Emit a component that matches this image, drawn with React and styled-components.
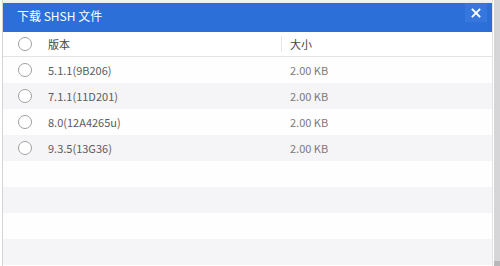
import React from 'react';
import styled, { createGlobalStyle } from 'styled-components';

const GlobalStyle = createGlobalStyle`
  html, body { margin: 0; padding: 0; background: #fff; }
  body { font-family: "Noto Sans CJK SC", "Noto Sans", sans-serif; overflow: hidden; }
`;

const rows = [
  { version: '5.1.1(9B206)', size: '2.00 KB' },
  { version: '7.1.1(11D201)', size: '2.00 KB' },
  { version: '8.0(12A4265u)', size: '2.00 KB' },
  { version: '9.3.5(13G36)', size: '2.00 KB' },
  null,
  null,
  null,
  null,
];

const App = () => {
  return (
    <>
      <GlobalStyle />
      <Page>
        <Dialog>
          <TopStrip />
          <Header>
            <Title>下载 SHSH 文件</Title>
            <Close>
              <svg width="10" height="10" viewBox="0 0 10 10">
                <path d="M1.5 1.5 L8.5 8.5 M8.5 1.5 L1.5 8.5" stroke="#fff" strokeWidth="1.8" strokeLinecap="square" />
              </svg>
            </Close>
          </Header>
          <Table>
            <HeadRow>
              <RadioCell><Radio /></RadioCell>
              <VersionCell $head>版本</VersionCell>
              <SizeCell $head>大小</SizeCell>
            </HeadRow>
            {rows.map((r, i) => (
              <Row key={i} $alt={i % 2 === 1}>
                {r && (
                  <>
                    <RadioCell><Radio /></RadioCell>
                    <VersionCell>{r.version}</VersionCell>
                    <SizeCell>{r.size}</SizeCell>
                  </>
                )}
              </Row>
            ))}
          </Table>
        </Dialog>
        <Scrollbar>
          <Thumb />
        </Scrollbar>
      </Page>
    </>
  );
};

export default App;

const Page = styled.div`
  width: 500px;
  height: 266px;
  display: flex;
  overflow: hidden;
  background: #fff;
`;

const Dialog = styled.div`
  width: 491px;
  margin-left: 2px;
  border-left: 1px solid #d4d4d6;
  border-right: 1px solid #e2e2e4;
  display: flex;
  flex-direction: column;
  overflow: hidden;
`;

const TopStrip = styled.div`
  height: 3px;
  background: linear-gradient(180deg, #f4f4f6, #e9ecf2);
  flex-shrink: 0;
`;

const Header = styled.div`
  height: 29px;
  background: #2c6fd8;
  display: flex;
  align-items: flex-start;
  justify-content: space-between;
  flex-shrink: 0;
`;

const Title = styled.div`
  color: #fff;
  font-size: 12px;
  line-height: 26px;
  padding-left: 14px;
`;

const Close = styled.div`
  width: 22px;
  height: 19px;
  margin-right: 5px;
  background: #3677de;
  display: flex;
  align-items: center;
  justify-content: center;
`;

const Table = styled.div`
  display: flex;
  flex-direction: column;
`;

const Row = styled.div`
  height: 26px;
  flex-shrink: 0;
  display: flex;
  align-items: center;
  background: ${p => (p.$alt ? '#f5f4f7' : '#fefefe')};
`;

const HeadRow = styled(Row)`
  height: 24px;
  background: #fff;
  border-bottom: 1px solid #e4e4e6;
`;

const RadioCell = styled.div`
  width: 43px;
  display: flex;
  justify-content: center;
`;

const Radio = styled.span`
  width: 14px;
  height: 14px;
  border-radius: 50%;
  border: 1px solid #a0a0a2;
  background: #fff;
  box-sizing: border-box;
  display: block;
`;

const VersionCell = styled.div`
  width: 233px;
  font-size: 11px;
  color: ${p => (p.$head ? '#444' : '#5c5c5c')};
  padding-left: 2px;
`;

const SizeCell = styled.div`
  flex: 1;
  font-size: 11px;
  color: ${p => (p.$head ? '#444' : '#7a7a7a')};
  padding-left: 8px;
  border-left: ${p => (p.$head ? '1px solid #e6e6e8' : '1px solid transparent')};
  line-height: 16px;
`;

const Scrollbar = styled.div`
  width: 6px;
  margin-left: 1px;
  background: #d6d6d8;
  display: flex;
  flex-direction: column;
  justify-content: flex-end;
`;

const Thumb = styled.div`
  height: 5px;
  background: #b8b8ba;
`;
